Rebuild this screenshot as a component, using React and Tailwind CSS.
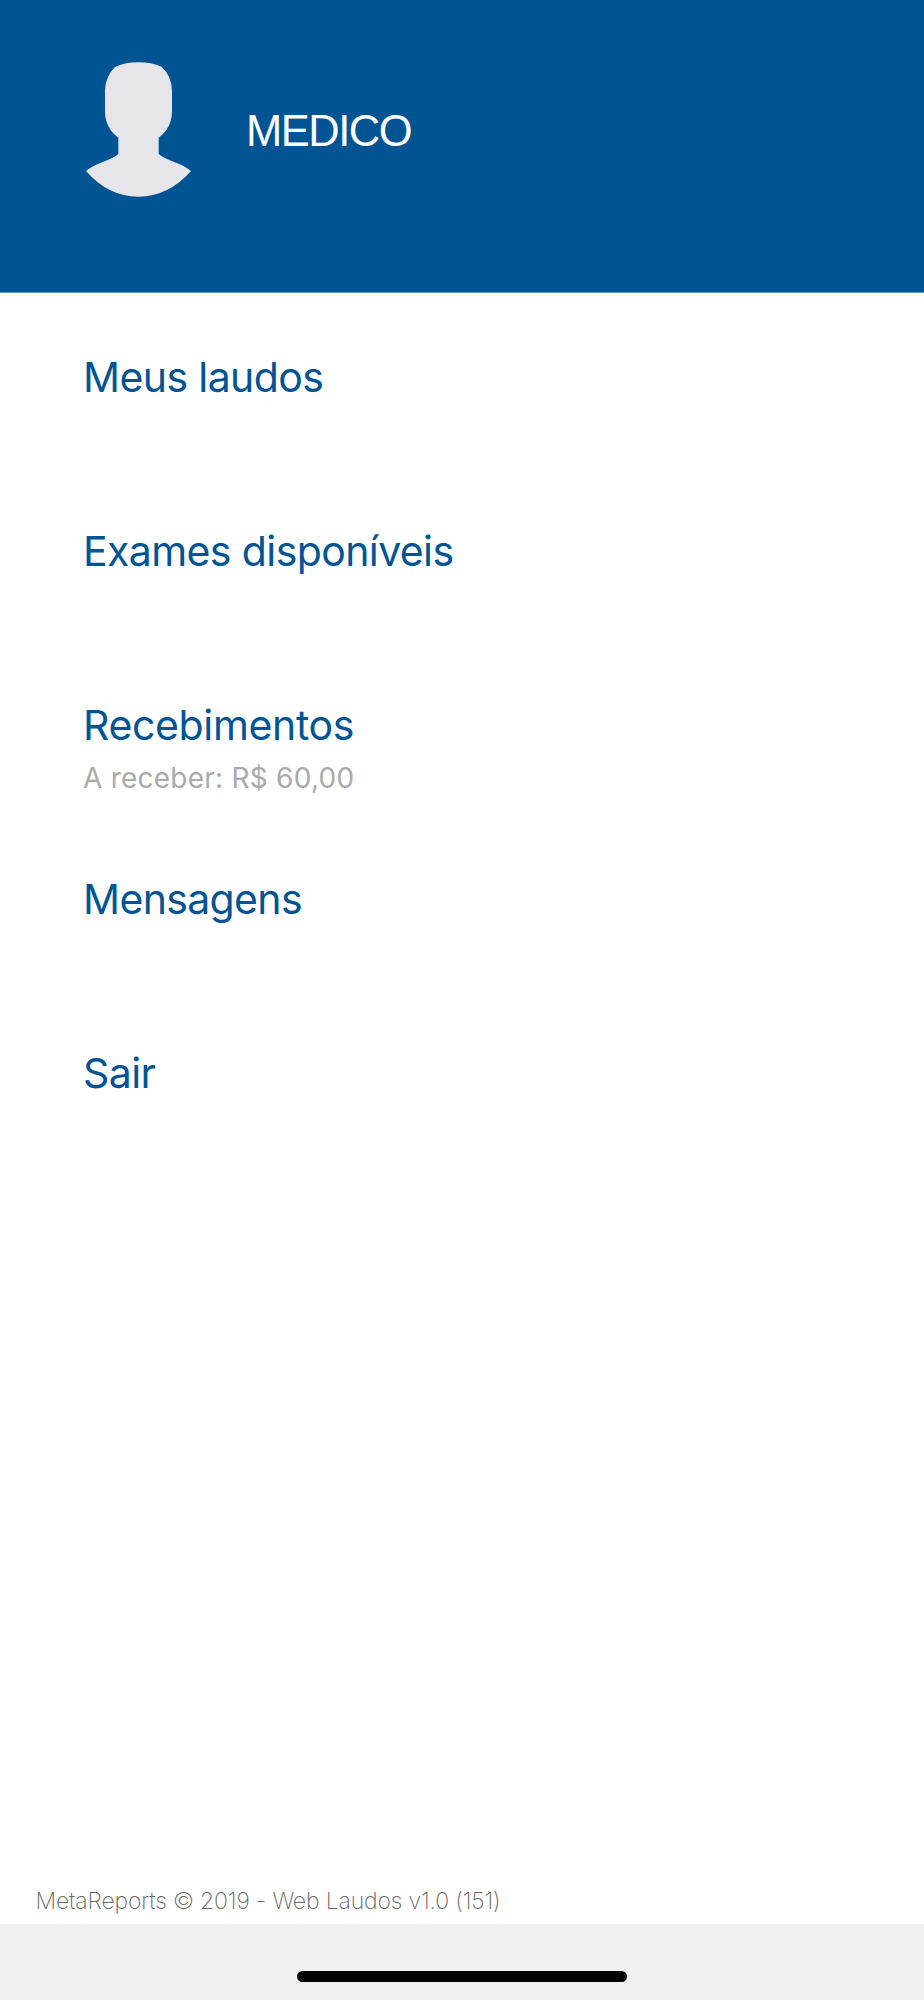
const menu = [
    {label: "Meus laudos", spacing: "tracking-[-0.6px]"},
    {label: "Exames disponíveis", spacing: "tracking-[-0.6px]"},
    {label: "Recebimentos", spacing: "tracking-[-0.35px]", info: "A receber: R$ 60,00"},
    {label: "Mensagens", spacing: "tracking-[-0.65px]"},
    {label: "Sair", spacing: "tracking-[-0.6px]"},
]

function Avatar() {
    return <svg className="w-[106px] h-[136px] shrink-0" viewBox="78 66 318 408" fill="#e6e5ea">
        <path d="M166 80 Q197 67 235 67 Q274 67 305 80 Q335 108 336 152 V215 Q335 264 296 293 V341 Q302 350 350 369 Q377 380 393 393 Q325 470 235 470 Q145 470 78 393 Q94 380 121 369 Q169 350 175 341 V293 Q136 264 135 215 V152 Q136 108 166 80 Z" />
    </svg>
}

function MenuItem({label, info, spacing}) {
    return <button className="flex flex-col items-start w-full h-[174px] pl-[83px] pt-[49px] text-left">
        <span className={`text-[41px] leading-[50px] text-[#005493] ${spacing}`}>{label}</span>
        {info && <span className="text-[28px] leading-[34px] mt-[11px] tracking-[0.24px] text-[#aaaaaa]">{info}</span>}
    </button>
}

export default function App() {
    return <div className="flex flex-col w-full h-[2000px] bg-white font-['Inter',sans-serif]">
        <header className="flex items-start h-[293px] pt-[62px] pl-[86px] bg-[#005493] border-b border-[#6698be]">
            <Avatar />
            <h1 className="ml-[54px] mt-[44px] text-[43.5px] leading-[50px] tracking-[-1.5px] text-white font-['Liberation_Sans',sans-serif]">MEDICO</h1>
        </header>
        <nav className="grow pt-[10px]">
            {menu.map((item) => <MenuItem key={item.label} {...item} />)}
        </nav>
        <p className="pl-[35.5px] mb-[8px] text-[23px] leading-[30px] font-extralight tracking-[-0.16px] text-[#666666]">MetaReports © 2019 - Web Laudos v1.0 (151)</p>
        <footer className="h-[76px] pt-[47px] bg-[#f1f1f1]">
            <div className="w-[330px] h-[11px] mx-auto rounded-full bg-black"></div>
        </footer>
    </div>
}
